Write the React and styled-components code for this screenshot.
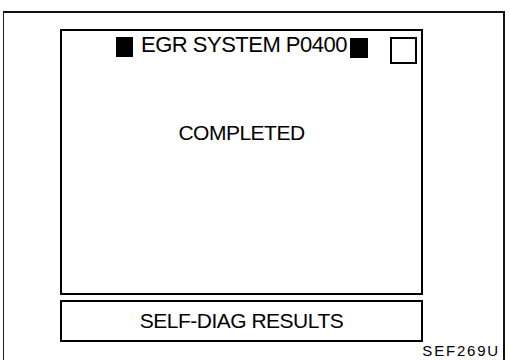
import React from "react";
import styled, { createGlobalStyle } from "styled-components";

const GlobalStyle = createGlobalStyle`
  html, body {
    margin: 0;
    padding: 0;
    background: #fff;
    overflow: hidden;
  }
  body {
    font-family: "Liberation Sans", Arial, Helvetica, sans-serif;
    color: #000;
  }
`;

const Frame = styled.div`
  box-sizing: border-box;
  margin: 11px 0 0 3px;
  width: 502px;
  height: 349px;
  border-top: 2px solid #111;
  border-left: 1px solid #222;
  border-right: 2px solid #111;
  padding: 16px 4px 0 56px;
  display: flex;
  flex-direction: column;
`;

const Screen = styled.div`
  box-sizing: border-box;
  width: 363px;
  height: 266px;
  border: 2px solid #000;
  display: flex;
  flex-direction: column;
  align-items: center;
`;

const TitleRow = styled.div`
  align-self: stretch;
  display: flex;
  align-items: flex-start;
  padding: 6px 0 0 54px;
`;

const Block = styled.span`
  display: block;
  width: ${(p) => p.$w}px;
  height: 20px;
  background: #000;
  margin-top: ${(p) => p.$top || 0}px;
`;

const Title = styled.span`
  font-size: 22px;
  line-height: 22px;
  letter-spacing: -0.5px;
  margin: -3px 3px 0 8px;
  white-space: nowrap;
`;

const CheckBox = styled.span`
  box-sizing: border-box;
  display: block;
  width: 27px;
  height: 27px;
  border: 2px solid #000;
  margin-left: 22px;
`;

const Message = styled.div`
  font-size: 21px;
  line-height: 21px;
  letter-spacing: -0.5px;
  margin-top: 58px;
`;

const Button = styled.div`
  box-sizing: border-box;
  width: 363px;
  height: 42px;
  margin-top: 5px;
  border: 2px solid #000;
  display: flex;
  align-items: center;
  justify-content: center;
  font-size: 21px;
  letter-spacing: -0.5px;
`;

const FigureCode = styled.div`
  align-self: flex-end;
  margin: 2px -1px 0 0;
  font-size: 15px;
  line-height: 13px;
  letter-spacing: 1.8px;
`;

const App = () => {
  return (
    <>
      <GlobalStyle />
      <Frame>
        <Screen>
          <TitleRow>
            <Block $w={17} />
            <Title>EGR SYSTEM P0400</Title>
            <Block $w={18} $top={1} />
            <CheckBox />
          </TitleRow>
          <Message>COMPLETED</Message>
        </Screen>
        <Button>SELF-DIAG RESULTS</Button>
        <FigureCode>SEF269U</FigureCode>
      </Frame>
    </>
  );
};

export default App;
